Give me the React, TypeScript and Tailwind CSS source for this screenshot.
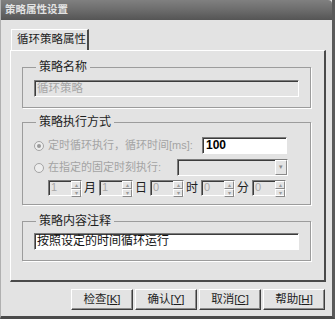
import React, { FC } from 'react'

const sunken =
  'border border-t-[#7c7c7c] border-l-[#7c7c7c] border-b-white border-r-white shadow-[inset_1px_1px_0_#3c3c3c]'

const Group: FC<{ title: string; className?: string; children: React.ReactNode }> = ({
  title,
  className = '',
  children,
}) => (
  <fieldset
    className={`w-[289px] border border-[#9c9c9c] px-[11px] shadow-[1px_1px_0_#fff] ${className}`}
  >
    <legend className="ml-[2px] px-[3px] text-[12px] leading-[14px] text-[#1e1e1e]">
      {title}
    </legend>
    {children}
  </fieldset>
)

const Radio: FC<{ checked?: boolean }> = ({ checked }) => (
  <span className="flex h-[10px] w-[10px] shrink-0 items-center justify-center rounded-full border border-[#a4a4a4] bg-[#ededed]">
    {checked && <span className="h-[4px] w-[4px] rounded-full bg-[#9a9a9a]" />}
  </span>
)

const Spinner: FC<{ value: string }> = ({ value }) => (
  <div className={`flex h-[16px] w-[34px] items-stretch bg-[#e4e4e4] ${sunken}`}>
    <span className="flex-1 pl-[2px] text-[11px] leading-[13px] text-[#a8a8a8]">{value}</span>
    <div className="flex w-[10px] flex-col">
      {['▴', '▾'].map((a) => (
        <span
          key={a}
          className="flex flex-1 items-center justify-center border border-t-white border-l-white border-r-[#8a8a8a] border-b-[#8a8a8a] text-[6px] leading-none text-[#9a9a9a]"
        >
          {a}
        </span>
      ))}
    </div>
  </div>
)

const Btn: FC<{ label: string; k: string }> = ({ label, k }) => (
  <div className="flex h-[21px] w-[62px] items-center justify-center border border-t-white border-l-white border-r-[#3e3e3e] border-b-[#3e3e3e] shadow-[inset_-1px_-1px_0_#8c8c8c] text-[11.5px] text-[#1e1e1e]">
    {label}[<span className="underline">{k}</span>]
  </div>
)

export default function App() {
  return (
    <div
      className="flex h-[319px] w-[335px] flex-col overflow-hidden bg-[#e3e3e3] border-l border-l-[#b0b0b0] border-r-[3px] border-r-[#5a5a5a] border-b-[3px] border-b-[#4a4a4a]"
      style={{ fontFamily: '"Liberation Sans", "Noto Sans CJK SC", sans-serif' }}
    >
      <div className="flex h-[20px] shrink-0 items-center rounded-tr-[4px] bg-linear-to-b from-[#808080] via-[#6c6c6c] to-[#555555] pl-[4px] text-[10.5px] font-bold text-[#e2e2e2]">
        策略属性设置
      </div>

      <div className="pl-[9px] pt-[9px]">
        <div className="ml-[1px] flex h-[21px] w-[78px] items-center border-t border-l border-t-white border-l-white border-r-2 border-r-[#4a4a4a] pl-[5px] text-[11.5px] text-[#1e1e1e]">
          循环策略属性
        </div>

        <div className="h-[232px] w-[316px] border-t border-l border-t-white border-l-white border-r-2 border-b-2 border-r-[#4a4a4a] border-b-[#4a4a4a] pl-[11px] pt-[9px]">
          <Group title="策略名称" className="pt-[6px] pb-[10px]">
            <div className={`h-[17px] w-[265px] bg-[#e4e4e4] pl-[2px] text-[11.5px] leading-[15px] text-[#a6a6a6] ${sunken}`}>
              循环策略
            </div>
          </Group>

          <Group title="策略执行方式" className="mt-[7px] pt-[8px] pb-[8px]">
            <div className="flex h-[17px] items-center pr-[12px]">
              <Radio checked />
              <span className="ml-[4px] text-[11px] text-[#a4a4a4]">定时循环执行，循环时间[ms]:</span>
              <div className={`ml-auto h-[17px] w-[85px] bg-white pl-[3px] text-[12px] font-bold leading-[15px] text-black ${sunken}`}>
                100
              </div>
            </div>
            <div className="mt-[5px] flex h-[17px] items-center pr-[11px]">
              <Radio />
              <span className="ml-[4px] text-[11px] text-[#a4a4a4]">在指定的固定时刻执行:</span>
              <div className={`ml-auto flex h-[17px] w-[111px] justify-end bg-[#e4e4e4] ${sunken}`}>
                <span className="flex w-[12px] items-center justify-center border border-t-white border-l-white border-r-[#8a8a8a] border-b-[#8a8a8a] text-[7px] text-[#8a8a8a]">
                  ▾
                </span>
              </div>
            </div>
            <div className="mt-[4px] flex h-[16px] items-center pl-[14px] text-[12px] text-[#1e1e1e]">
              <Spinner value="1" />
              <span className="ml-[2px] mr-[3px]">月</span>
              <Spinner value="1" />
              <span className="ml-[2px] mr-[3px]">日</span>
              <Spinner value="0" />
              <span className="ml-[2px] mr-[3px]">时</span>
              <Spinner value="0" />
              <span className="ml-[2px] mr-[3px]">分</span>
              <Spinner value="0" />
            </div>
          </Group>

          <Group title="策略内容注释" className="mt-[9px] pt-[5px] pb-[10px]">
            <div className={`h-[17px] w-[265px] bg-white pl-[2px] text-[12px] leading-[15px] text-[#111] ${sunken}`}>
              按照设定的时间循环运行
            </div>
          </Group>
        </div>
      </div>

      <div className="mt-[7px] flex justify-end gap-[2px] pr-[7px]">
        <Btn label="检查" k="K" />
        <Btn label="确认" k="Y" />
        <Btn label="取消" k="C" />
        <Btn label="帮助" k="H" />
      </div>
    </div>
  )
}
